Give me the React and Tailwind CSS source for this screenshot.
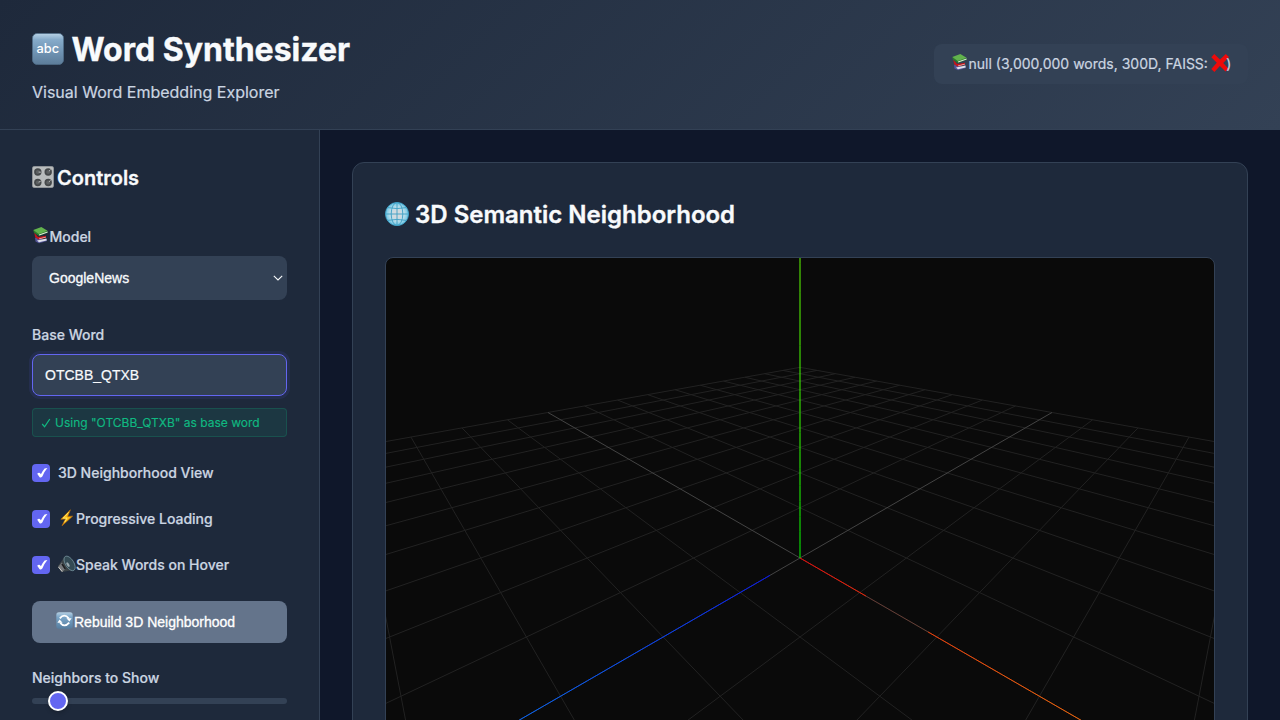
import React from "react";

const FOCAL = 300 / Math.tan((75 * Math.PI) / 360);
const S2 = Math.SQRT2;
const S3 = Math.sqrt(3);
const S6 = Math.sqrt(6);
const CAM = 3 * S3;
const NEAR = 0.1;

const depth = ([x, y, z]) => CAM - (x + y + z) / S3;

function project(p) {
  const d = depth(p);
  const [x, y, z] = p;
  return [414 + (FOCAL * (x - z)) / S2 / d, 300 - (FOCAL * (2 * y - x - z)) / S6 / d];
}

const mix = (a, b, t) => a.map((v, i) => v + (b[i] - v) * t);

function clip(a, b) {
  const da = depth(a);
  const db = depth(b);
  if (da < NEAR && db < NEAR) return null;
  if (da < NEAR) return [mix(a, b, (NEAR - da) / (db - da)), b];
  if (db < NEAR) return [a, mix(a, b, (NEAR - da) / (db - da))];
  return [a, b];
}

function Line({ a, b, color }) {
  const c = clip(a, b);
  if (!c) return null;
  const [x1, y1] = project(c[0]);
  const [x2, y2] = project(c[1]);
  return <line x1={x1} y1={y1} x2={x2} y2={y2} stroke={color} strokeWidth="1" />;
}

function Axis({ dir, from, to, start = 0, end = 5 }) {
  const n = 24;
  const out = [];
  for (let i = 0; i < n; i++) {
    const t0 = start + ((end - start) * i) / n;
    const t1 = start + ((end - start) * (i + 1)) / n;
    const c = mix(from, to, (t0 + t1) / 10).map(Math.round);
    out.push(
      <Line key={i} a={dir.map((v) => v * t0)} b={dir.map((v) => v * t1)} color={`rgb(${c.join(",")})`} />
    );
  }
  return <>{out}</>;
}

function Scene() {
  const grid = [];
  for (let k = -10; k <= 10; k++) {
    if (k === 0) continue;
    grid.push(<Line key={`x${k}`} a={[-10, 0, k]} b={[10, 0, k]} color="#222222" />);
    grid.push(<Line key={`z${k}`} a={[k, 0, -10]} b={[k, 0, 10]} color="#222222" />);
  }
  const red = [245, 0, 0];
  const orange = [245, 147, 0];
  return (
    <svg width="828" height="600" viewBox="0 0 828 600" className="block">
      {grid}
      <Line a={[-10, 0, 0]} b={[10, 0, 0]} color="#444444" />
      <Line a={[0, 0, -10]} b={[0, 0, 10]} color="#444444" />
      <Axis dir={[1, 0, 0]} from={red} to={orange} end={1.09} />
      <g opacity="0.2">
        <Axis dir={[1, 0, 0]} from={red} to={orange} start={1.09} end={1.9} />
      </g>
      <Axis dir={[1, 0, 0]} from={red} to={orange} start={1.9} />
      <Axis dir={[0, 0, 1]} from={[0, 0, 250]} to={[0, 150, 250]} start={0.53} />
      <Axis dir={[0, 1, 0]} from={[0, 255, 0]} to={[153, 255, 0]} />
    </svg>
  );
}

function AbcIcon() {
  return (
    <svg width="32" height="32" viewBox="0 0 32 32" className="shrink-0">
      <defs>
        <linearGradient id="abc" x1="0" y1="0" x2="0" y2="1">
          <stop offset="0" stopColor="#b9d3e6" />
          <stop offset="0.2" stopColor="#86abca" />
          <stop offset="0.6" stopColor="#6f93b3" />
          <stop offset="1" stopColor="#5c7c99" />
        </linearGradient>
      </defs>
      <rect x="0.4" y="0.4" width="31.2" height="31.2" rx="5" fill="url(#abc)" stroke="#4f6d88" strokeWidth="0.8" />
      <text x="15.8" y="20" textAnchor="middle" fontFamily="Inter, sans-serif" fontWeight="500" fontSize="12.8" fill="#fff">abc</text>
    </svg>
  );
}

function BooksIcon() {
  return (
    <svg width="17" height="18" viewBox="0 0 17 18" className="shrink-0">
      <path d="M3 11.5 L12 14 L15 13 V15 L7 17.2 L3.5 15.5Z" fill="#54559a" />
      <path d="M5 14.6 L14.5 12.6 V14.4 L7 16.2Z" fill="#dfe1ea" />
      <path d="M2.2 6.5 L6 11 L14 9.8 V11.8 L6.5 13.6 L3.2 11.2Z" fill="#c4161c" />
      <path d="M7 12.4 L13.8 10.8 V11.6 L7.2 13.2Z" fill="#e9b9b5" />
      <path d="M1.2 4.2 L2 6.8 L7 10 L15.6 6.8 V5.3Z" fill="#2d7a2b" />
      <path d="M1.3 4 L9.3 1 L15.6 4.8 L6.8 8Z" fill="#62b34d" />
      <path d="M7 8.6 L15.6 5.4 V6.4 L7.2 9.6Z" fill="#e6eee2" />
    </svg>
  );
}

function KnobsIcon() {
  return (
    <svg width="22" height="22" viewBox="0 0 22 22" className="shrink-0">
      <rect x="0.3" y="0.3" width="21.4" height="21.4" rx="2.2" fill="#b9bcbd" stroke="#8d9092" strokeWidth="0.6" />
      {[[5.8, 6, 3, 0.2], [16.2, 6, 2.4, -2.4], [5.8, 16.5, 2.8, -1.2], [16.2, 16.5, 2.4, -2.2]].map(([x, y, dx, dy], i) => (
        <g key={i}>
          <circle cx={x} cy={y} r="3.7" fill="#45484a" />
          <circle cx={x} cy={y} r="2" fill="#5c5f61" />
          <path d={`M${x + dx * 0.3} ${y + dy * 0.3} L${x + dx} ${y + dy}`} stroke="#c5c8c9" strokeWidth="0.9" />
        </g>
      ))}
    </svg>
  );
}

function GlobeIcon() {
  return (
    <svg width="24" height="24" viewBox="0 0 24 24" className="shrink-0">
      <defs>
        <radialGradient id="globe">
          <stop offset="0.3" stopColor="#d3dade" />
          <stop offset="0.65" stopColor="#b5dcea" />
          <stop offset="1" stopColor="#6cc4e3" />
        </radialGradient>
      </defs>
      <circle cx="12" cy="12" r="11.5" fill="url(#globe)" stroke="#3fa3c9" strokeWidth="0.9" />
      <g fill="none" stroke="#3d9fc4" strokeWidth="0.9">
        <path d="M12 .5V23.5M.5 12H23.5M2.8 5.6Q12 7.6 21.2 5.6M2.8 18.4Q12 16.4 21.2 18.4" />
        <ellipse cx="12" cy="12" rx="5.8" ry="11.5" />
      </g>
    </svg>
  );
}

function CrossIcon() {
  return (
    <svg width="18" height="18" viewBox="0 0 18 18" className="-mt-px -mr-[3px] -ml-[0.5px] shrink-0">
      <path d="M3.3 0 L9 5.6 L14.8 0 L18 3 L12.2 9 L17.5 14.8 L14.5 17.4 L8.9 12.1 L3.4 18 L0.3 15 L5.8 8.8 L0.3 3.3Z" fill="#ee0a0a" />
    </svg>
  );
}

function BoltIcon() {
  return (
    <svg width="18" height="18" viewBox="0 0 18 18" className="-mt-[2px] shrink-0">
      <path d="M12.4 .8 L2.8 10.3 L7.4 10 L4 16.8 L14.6 7.2 L9.7 7.4Z" fill="#fdbb14" stroke="#b86a0b" strokeWidth="0.7" />
      <path d="M10.6 3.4 L5.2 9.1 L9 9 L6.6 13.2" fill="none" stroke="#fff07a" strokeWidth="0.8" />
    </svg>
  );
}

function SpeakerIcon() {
  return (
    <svg width="18" height="18" viewBox="0 0 18 18" className="-mt-[3px] shrink-0">
      <path d="M0 11 L7 1.2 Q15.5 5 15.4 15 L4 17Z" fill="#3b4347" />
      <ellipse cx="11.6" cy="8.4" rx="4.2" ry="8.2" transform="rotate(-32 11.6 8.4)" fill="#334a54" stroke="#6f8b96" strokeWidth="0.8" />
      <ellipse cx="10" cy="9.6" rx="1.2" ry="2.6" transform="rotate(-32 10 9.6)" fill="#9aa8ad" />
      <path d="M0 12 L3.8 7.6 L8 13.6 L4 17Z" fill="#75777a" />
      <path d="M.6 12.2 L4.2 16.6" stroke="#cfcfca" strokeWidth="1" />
      <path d="M4 9 L7.4 14" stroke="#1c1e20" strokeWidth="1.6" />
    </svg>
  );
}

function ReloadIcon() {
  return (
    <svg width="17" height="17" viewBox="0 0 17 17" className="shrink-0">
      <defs>
        <linearGradient id="reload" x1="0" y1="0" x2="0" y2="1">
          <stop offset="0" stopColor="#b4cfe2" />
          <stop offset="0.3" stopColor="#7ba6c8" />
          <stop offset="1" stopColor="#557d9f" />
        </linearGradient>
      </defs>
      <rect x="0.3" y="0.3" width="16.4" height="16.4" rx="2.6" fill="url(#reload)" />
      <g fill="none" stroke="#fff" strokeWidth="1.8">
        <path d="M3.8 6.4 Q8.2 1 12.8 6.4" />
        <path d="M13.2 10.6 Q8.6 16 4.2 10.8" />
      </g>
      <path d="M10.4 6.2 L15.6 6.2 L13.4 9.4Z M1.4 10.8 L6.6 10.8 L3.6 7.6Z" fill="#fff" />
    </svg>
  );
}

function Check({ icon, children }) {
  return (
    <label className="flex h-[22px] items-center gap-2">
      <span className="flex h-[18px] w-[18px] items-center justify-center rounded bg-[#6366f1]">
        <svg width="12" height="12" viewBox="0 0 12 12" className="ml-px">
          <path d="M1.2 6.8 Q2.4 5.2 3.9 5.9 L4.9 7.2 Q6.8 3.4 8.6 1.4 L11.4 1 Q8 4.9 6.3 9.6 Q4.8 11.2 3.6 10.2 Z" fill="#fff" />
        </svg>
      </span>
      <span className="flex items-center text-[14px] leading-[22px] font-medium text-[#cbd5e1] [-webkit-text-stroke:0.2px_#cbd5e1]">
        {icon}
        {children}
      </span>
    </label>
  );
}

export default function App() {
  return (
    <div className="flex h-[720px] w-[1280px] flex-col overflow-hidden bg-[#0f172a] font-[Inter,sans-serif] text-[#f8fafc]">
      <header className="flex h-[130px] shrink-0 items-center justify-between border-b border-[#334155] bg-[linear-gradient(135deg,#1e293b_0%,#334155_100%)] px-8">
        <div className="flex flex-col">
          <h1 className="flex h-[51px] items-center gap-[7.5px] text-[32px] font-bold [-webkit-text-stroke:0.4px_#f8fafc]">
            <AbcIcon />
            <span className="mt-[2px] whitespace-nowrap">Word Synthesizer</span>
          </h1>
          <p className="mt-[4px] mb-px h-[26px] text-[16px] leading-[26px] text-[#cbd5e1] [-webkit-text-stroke:0.2px_#cbd5e1]">
            Visual Word Embedding Explorer
          </p>
        </div>
        <div className="mb-[2px] flex h-10 w-[314px] items-center rounded-lg bg-[#334155] pl-[17px] text-[14px] whitespace-nowrap text-[#cbd5e1] [-webkit-text-stroke:0.2px_#cbd5e1]">
          <span className="-mt-1 mr-[0.5px] flex"><BooksIcon /></span>
          <span>null (3,000,000 words, 300D, FAISS:&nbsp;</span>
          <CrossIcon />
          <span>)</span>
        </div>
      </header>

      <div className="flex min-h-0 flex-1">
        <aside className="flex w-80 shrink-0 flex-col overflow-hidden border-r border-[#334155] bg-[#1e293b] px-8 pt-8">
          <h2 className="flex h-8 shrink-0 items-center gap-[3px] text-[20px] font-semibold [-webkit-text-stroke:0.3px_#f8fafc]">
            <span className="-mt-[2px] flex"><KnobsIcon /></span>
            <span>Controls</span>
          </h2>

          <div className="mt-[31px] mb-px flex h-[22px] shrink-0 items-center text-[14px] font-medium text-[#cbd5e1] [-webkit-text-stroke:0.2px_#cbd5e1]">
            <span className="-mt-[3px] mr-[0.5px] flex"><BooksIcon /></span>
            <span>Model</span>
          </div>
          <div className="mt-2 flex h-[43.5px] w-[255px] shrink-0 items-center justify-between rounded-lg bg-[#334155] pr-1 pl-[17px] font-['Liberation_Sans',sans-serif] text-[14px] [-webkit-text-stroke:0.3px_#f8fafc]">
            <span className="mt-px">GoogleNews</span>
            <svg width="10" height="6" viewBox="0 0 10 6" fill="none" stroke="#f8fafc" strokeWidth="1.1">
              <path d="M.8 .8 L5 5 L9.2 .8" />
            </svg>
          </div>

          <div className="mt-[24.5px] h-[22px] shrink-0 text-[14px] leading-[22px] font-medium text-[#cbd5e1] [-webkit-text-stroke:0.2px_#cbd5e1]">Base Word</div>
          <div className="mt-2 flex h-[42px] w-[255px] shrink-0 items-center rounded-lg border border-[#6366f1] bg-[#334155] pl-3 font-['Liberation_Sans',sans-serif] text-[14px] shadow-[0_0_0_3px_rgba(99,102,241,0.1)] [-webkit-text-stroke:0.2px_#f8fafc]">
            OTCBB_QTXB
          </div>
          <div className="mt-3 flex h-[29px] w-[255px] shrink-0 items-center rounded border border-[#10b981]/20 bg-[#10b981]/10 pl-2 text-[12px] text-[#10b981] [-webkit-text-stroke:0.15px_#10b981]">
            <svg width="11" height="12" viewBox="0 0 11 12" fill="none" stroke="#10b981" strokeWidth="1.3" className="mr-[3px]">
              <path d="M1.2 7 L3.6 9.8 L8.8 2" />
            </svg>
            <span>Using "OTCBB_QTXB" as base word</span>
          </div>

          <div className="mt-[25px] flex shrink-0 flex-col gap-6">
            <Check>3D Neighborhood View</Check>
            <Check icon={<BoltIcon />}>Progressive Loading</Check>
            <Check icon={<SpeakerIcon />}>Speak Words on Hover</Check>
          </div>

          <div className="mt-[24.5px] flex h-[42.5px] w-[255px] shrink-0 items-center rounded-lg bg-[#64748b] pl-6 font-['Liberation_Sans',sans-serif] text-[14px] text-white [-webkit-text-stroke:0.3px_#ffffff]">
            <span className="-mt-[3px] mr-px flex"><ReloadIcon /></span>
            <span className="mt-px">Rebuild 3D Neighborhood</span>
          </div>

          <div className="mt-6 h-[22px] shrink-0 text-[14px] leading-[22px] font-medium text-[#cbd5e1] [-webkit-text-stroke:0.2px_#cbd5e1]">Neighbors to Show</div>
          <div className="mt-[8.5px] flex h-[6px] w-[255px] shrink-0 items-center rounded-[3px] bg-[#334155] pl-[15.5px]">
            <span className="h-[20px] w-[20px] shrink-0 rounded-full border-2 border-white bg-[#6366f1] shadow-[0_2px_4px_rgba(0,0,0,0.2)]" />
          </div>
        </aside>

        <main className="min-w-0 flex-1 overflow-hidden p-8">
          <section className="h-[760px] rounded-xl border border-[#334155] bg-[#1e293b] p-8">
            <h2 className="flex h-[38px] items-center gap-[6px] text-[24px] font-semibold [-webkit-text-stroke:0.35px_#f8fafc]">
              <GlobeIcon />
              <span className="mt-[2px]">3D Semantic Neighborhood</span>
            </h2>
            <div className="mt-6 h-[602px] w-[830px] overflow-hidden rounded-lg border border-[#334155] bg-[#0a0a0a]">
              <Scene />
            </div>
          </section>
        </main>
      </div>
    </div>
  );
}
